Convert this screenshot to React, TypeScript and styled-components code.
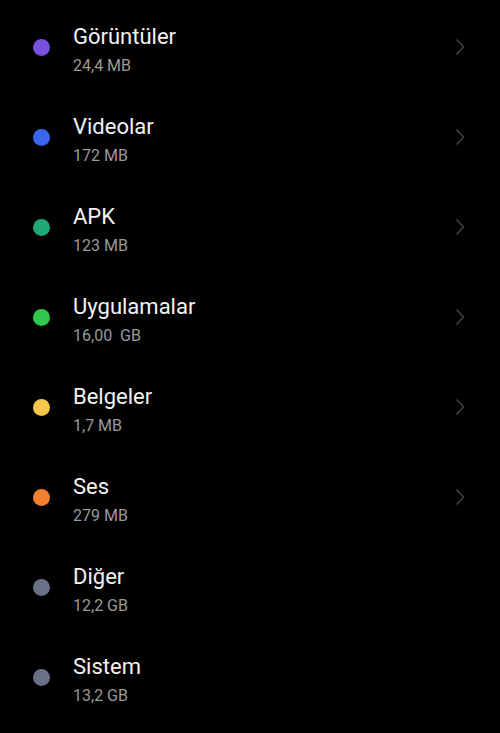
import React from "react";
import styled, { createGlobalStyle } from "styled-components";

const GlobalStyle = createGlobalStyle`
    html, body {
        margin: 0;
        padding: 0;
        background: #000;
    }
    body {
        font-family: Roboto, "Noto Sans", "Liberation Sans", sans-serif;
    }
`;

const   List = styled.ul`
            list-style: none;
            margin: 0;
            padding: 2px 0 0;
            width: 500px;
            height: 733px;
            background: #000;
            overflow: hidden;
        `,
        Row = styled.li`
            display: flex;
            align-items: center;
            height: 90px;
            padding: 0 33px;
        `,
        Dot = styled.span<{ $color: string }>`
            flex: none;
            width: 17px;
            height: 17px;
            border-radius: 50%;
            background: ${p => p.$color};
            margin-right: 23px;
        `,
        Text = styled.div`
            flex: 1;
            display: flex;
            flex-direction: column;
            padding-top: 5px;
        `,
        Title = styled.span`
            color: #f2f2f2;
            font-size: 22px;
            line-height: 28px;
        `,
        Size = styled.span`
            color: #9a9a9a;
            font-size: 16px;
            line-height: 20px;
            margin-top: 5px;
            white-space: pre;
        `,
        Chevron = styled.svg`
            flex: none;
            width: 12px;
            height: 18px;
            margin-right: 1px;
        `;

const items = [
    { name: "Görüntüler", size: "24,4 MB", color: "#7a50e0", arrow: true },
    { name: "Videolar", size: "172 MB", color: "#3a66ef", arrow: true },
    { name: "APK", size: "123 MB", color: "#1fa874", arrow: true },
    { name: "Uygulamalar", size: "16,00  GB", color: "#2fc74c", arrow: true },
    { name: "Belgeler", size: "1,7 MB", color: "#f8c64a", arrow: true },
    { name: "Ses", size: "279 MB", color: "#f2802c", arrow: true },
    { name: "Diğer", size: "12,2 GB", color: "#6b7089", arrow: false },
    { name: "Sistem", size: "13,2 GB", color: "#6b7089", arrow: false },
];

export default function App() {
    return (
        <>
            <GlobalStyle />
            <List>
                {items.map(item => (
                    <Row key={item.name}>
                        <Dot $color={item.color} />
                        <Text>
                            <Title>{item.name}</Title>
                            <Size>{item.size}</Size>
                        </Text>
                        {item.arrow && (
                            <Chevron viewBox="0 0 12 18">
                                <path d="M2.5 1.5 L9.5 9 L2.5 16.5" fill="none" stroke="#3c3c3c" strokeWidth="1.8" />
                            </Chevron>
                        )}
                    </Row>
                ))}
            </List>
        </>
    );
}
